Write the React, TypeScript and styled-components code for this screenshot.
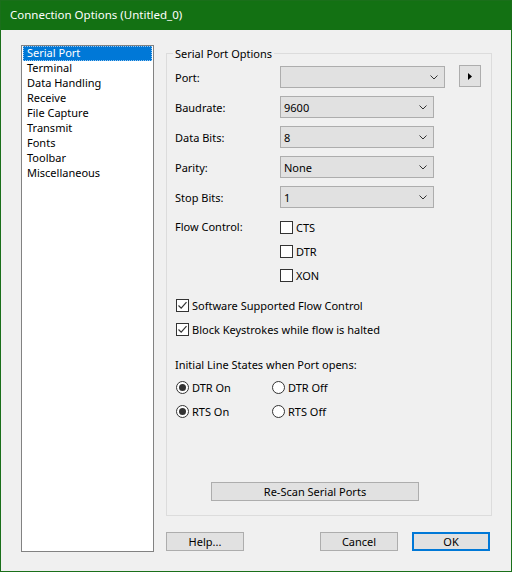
import styled, { createGlobalStyle } from "styled-components";
import React from "react";

const GlobalStyle = createGlobalStyle`
  html, body {
    margin: 0;
    padding: 0;
    background: #f0f0f0;
  }
  body {
    font-family: "Noto Sans", "Segoe UI", sans-serif;
    font-size: 11px;
    color: #000;
  }
`;

const Window = styled.div`
  width: 512px;
  height: 572px;
  box-sizing: border-box;
  border: 1px solid #1a6f1a;
  background: #f0f0f0;
  display: flex;
  flex-direction: column;
`;

const TitleBar = styled.div`
  height: 29px;
  box-sizing: border-box;
  padding: 0 0 2px 9px;
  background: #137113;
  color: #fff;
  display: flex;
  align-items: center;
  font-size: 11.5px;
`;

const Body = styled.div`
  flex: 1;
  display: flex;
  padding: 15px 0 0 20px;
  gap: 12px;
`;

const CategoryList = styled.ul`
  list-style: none;
  margin: 0;
  padding: 0;
  width: 133px;
  height: 507px;
  box-sizing: border-box;
  border: 1px solid #828282;
  background: #fff;
`;

const CategoryItem = styled.li<{ $selected?: boolean }>`
  height: 15px;
  line-height: 14px;
  padding-left: 4px;
  margin: 0 1px;
  box-sizing: border-box;
  white-space: nowrap;
  background: ${(p) => (p.$selected ? "#0078d7" : "transparent")};
  color: ${(p) => (p.$selected ? "#fff" : "#000")};
  outline: ${(p) => (p.$selected ? "1px dotted #9cc8ef" : "none")};
  outline-offset: -1px;
`;

const RightPane = styled.div`
  display: flex;
  flex-direction: column;
  padding-top: 1px;
`;

const Group = styled.fieldset`
  width: 326px;
  height: 470px;
  box-sizing: border-box;
  margin: 0;
  padding: 5px 8px 13px 8px;
  border: 1px solid #dcdcdc;
  display: flex;
  flex-direction: column;
`;

const GroupTitle = styled.legend`
  padding: 0 2px;
  margin-left: -2px;
  line-height: 15px;
`;

const FieldRow = styled.div`
  display: flex;
  align-items: center;
  height: 22px;
  margin-bottom: 8px;
`;

const FieldLabel = styled.div`
  width: 105px;
  flex-shrink: 0;
`;

const Combo = styled.div<{ $width: number }>`
  width: ${(p) => p.$width}px;
  height: 22px;
  box-sizing: border-box;
  border: 1px solid #adadad;
  background: #e1e1e1;
  display: flex;
  align-items: center;
  justify-content: space-between;
  padding: 0 6px 0 3px;
`;

const SideButton = styled.div`
  width: 22px;
  height: 22px;
  box-sizing: border-box;
  border: 1px solid #adadad;
  background: #e1e1e1;
  margin-left: 14px;
  margin-top: -2px;
  display: flex;
  align-items: center;
  justify-content: center;
`;

const FlowBlock = styled.div`
  display: flex;
  margin-top: -1px;
`;

const FlowLabel = styled.div`
  width: 105px;
  height: 24px;
  line-height: 23px;
`;

const FlowOptions = styled.div`
  display: flex;
  flex-direction: column;
`;

const CheckRow = styled.label<{ $indent?: number }>`
  display: flex;
  align-items: center;
  height: 24px;
  padding-left: ${(p) => p.$indent ?? 0}px;
  gap: 3px;
`;

const Box = styled.span`
  width: 13px;
  height: 13px;
  box-sizing: border-box;
  border: 1px solid #333;
  background: #fff;
  display: flex;
  align-items: center;
  justify-content: center;
`;

const SoftwareBlock = styled.div`
  margin-top: 6px;
  display: flex;
  flex-direction: column;
`;

const SectionLabel = styled.div`
  margin-top: 16px;
  height: 16px;
  line-height: 16px;
`;

const RadioGrid = styled.div`
  display: grid;
  grid-template-columns: 96px auto;
  padding-left: 1px;
  margin-top: 2px;
`;

const Radio = styled.span<{ $on?: boolean }>`
  width: 13px;
  height: 13px;
  box-sizing: border-box;
  border: 1px solid #333;
  border-radius: 50%;
  background: #fff;
  display: flex;
  align-items: center;
  justify-content: center;

  &::after {
    content: "";
    display: ${(p) => (p.$on ? "block" : "none")};
    width: 7px;
    height: 7px;
    border-radius: 50%;
    background: #333;
  }
`;

const PushButton = styled.div<{ $default?: boolean; $width: number }>`
  width: ${(p) => p.$width}px;
  height: 19px;
  box-sizing: border-box;
  border: ${(p) => (p.$default ? "2px solid #0078d7" : "1px solid #adadad")};
  background: #e1e1e1;
  display: flex;
  align-items: center;
  justify-content: center;
`;

const RescanWrap = styled.div`
  margin-top: 59px;
  padding-left: 36px;
`;

const ButtonRow = styled.div`
  display: flex;
  margin-top: 16px;
`;

const Chevron = () => (
  <svg width="8" height="5" viewBox="0 0 8 5">
    <path d="M0.5 0.5 L4 4 L7.5 0.5" fill="none" stroke="#333" strokeWidth="1" />
  </svg>
);

const Triangle = () => (
  <svg width="4" height="7" viewBox="0 0 4 7">
    <path d="M0 0 L4 3.5 L0 7 Z" fill="#000" />
  </svg>
);

const Check = () => (
  <svg width="11" height="11" viewBox="0 0 11 11">
    <path d="M1.5 5.5 L4.2 8.2 L9.5 2.2" fill="none" stroke="#333" strokeWidth="1.2" />
  </svg>
);

const categories = [
  "Serial Port",
  "Terminal",
  "Data Handling",
  "Receive",
  "File Capture",
  "Transmit",
  "Fonts",
  "Toolbar",
  "Miscellaneous",
];

const combos = [
  { label: "Baudrate:", value: "9600" },
  { label: "Data Bits:", value: "8" },
  { label: "Parity:", value: "None" },
  { label: "Stop Bits:", value: "1" },
];

const CheckItem = ({ text, checked, indent }: { text: string; checked?: boolean; indent?: number }) => (
  <CheckRow $indent={indent}>
    <Box>{checked && <Check />}</Box>
    {text}
  </CheckRow>
);

const RadioItem = ({ text, on }: { text: string; on?: boolean }) => (
  <CheckRow>
    <Radio $on={on} />
    {text}
  </CheckRow>
);

export default function App() {
  return (
    <>
      <GlobalStyle />
      <Window>
        <TitleBar>Connection Options (Untitled_0)</TitleBar>
        <Body>
          <CategoryList>
            {categories.map((c, i) => (
              <CategoryItem key={c} $selected={i === 0}>
                {c}
              </CategoryItem>
            ))}
          </CategoryList>
          <RightPane>
            <Group>
              <GroupTitle>Serial Port Options</GroupTitle>
              <FieldRow>
                <FieldLabel>Port:</FieldLabel>
                <Combo $width={165}>
                  <span />
                  <Chevron />
                </Combo>
                <SideButton>
                  <Triangle />
                </SideButton>
              </FieldRow>
              {combos.map((c) => (
                <FieldRow key={c.label}>
                  <FieldLabel>{c.label}</FieldLabel>
                  <Combo $width={154}>
                    <span>{c.value}</span>
                    <Chevron />
                  </Combo>
                </FieldRow>
              ))}
              <FlowBlock>
                <FlowLabel>Flow Control:</FlowLabel>
                <FlowOptions>
                  <CheckItem text="CTS" />
                  <CheckItem text="DTR" />
                  <CheckItem text="XON" />
                </FlowOptions>
              </FlowBlock>
              <SoftwareBlock>
                <CheckItem text="Software Supported Flow Control" checked indent={1} />
                <CheckItem text="Block Keystrokes while flow is halted" checked indent={1} />
              </SoftwareBlock>
              <SectionLabel>Initial Line States when Port opens:</SectionLabel>
              <RadioGrid>
                <RadioItem text="DTR On" on />
                <RadioItem text="DTR Off" />
                <RadioItem text="RTS On" on />
                <RadioItem text="RTS Off" />
              </RadioGrid>
              <RescanWrap>
                <PushButton $width={208}>Re-Scan Serial Ports</PushButton>
              </RescanWrap>
            </Group>
            <ButtonRow>
              <PushButton $width={78}>Help...</PushButton>
              <PushButton $width={78} style={{ marginLeft: 76 }}>
                Cancel
              </PushButton>
              <PushButton $width={78} $default style={{ marginLeft: 14 }}>
                OK
              </PushButton>
            </ButtonRow>
          </RightPane>
        </Body>
      </Window>
    </>
  );
}
